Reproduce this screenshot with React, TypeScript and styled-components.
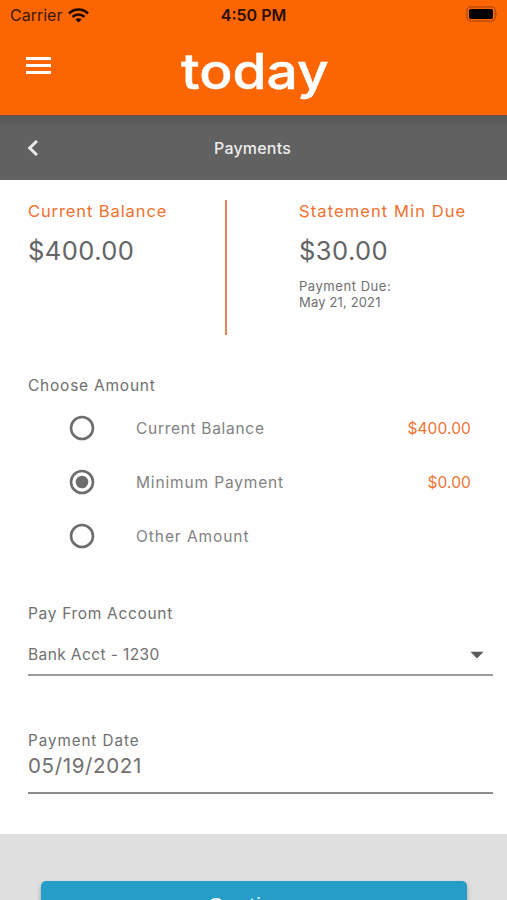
import React, { useState } from "react";
import styled, { createGlobalStyle } from "styled-components";

const GlobalStyle = createGlobalStyle`
  * { box-sizing: border-box; }
  html, body { margin: 0; padding: 0; background: #fefefe; }
  body { overflow: hidden; font-family: Inter, "Liberation Sans", sans-serif; color: #6a6a6a; }
`;

const Screen = styled.div`
  width: 507px;
  height: 900px;
  overflow: hidden;
  display: flex;
  flex-direction: column;
  background: #fefefe;
`;

const Text = styled.span<{ $size: number; $spacing?: number; $line: number; $weight?: number; $color?: string }>`
  display: block;
  width: max-content;
  white-space: nowrap;
  font-size: ${(p) => p.$size}px;
  letter-spacing: ${(p) => p.$spacing ?? 0}px;
  line-height: ${(p) => p.$line}px;
  font-weight: ${(p) => p.$weight ?? 400};
  color: ${(p) => p.$color ?? "#707070"};
`;

const Header = styled.header`
  flex: none;
  height: 115px;
  background: #fb6502;
`;

const StatusBar = styled.div`
  height: 30px;
  padding: 0 9px 0 9px;
  display: grid;
  grid-template-columns: 1fr auto 1fr;
  align-items: center;
`;

const Carrier = styled.div`
  display: flex;
  align-items: center;
  gap: 6px;
  padding-left: 1px;
`;

const BatteryIcon = styled.svg`
  justify-self: end;
  margin-bottom: 2px;
`;

const Brand = styled.div`
  height: 85px;
  display: grid;
  grid-template-columns: 181px 1fr;
  align-items: start;
`;

const MenuButton = styled.button`
  width: 25px;
  height: 18px;
  margin: 27px 0 0 26px;
  padding: 0;
  border: 0;
  background: none;
  display: flex;
  flex-direction: column;
  gap: 4px;
`;

const MenuLine = styled.span`
  height: 3px;
  background: #fff;
`;

const Logo = styled.div`
  width: max-content;
  margin-top: 12px;
  font-size: 49px;
  font-weight: 500;
  line-height: 60px;
  -webkit-text-stroke: 0.5px #fff;
  color: #fff;
  transform: scaleX(1.125);
  transform-origin: left center;
`;

const TitleBar = styled.div`
  flex: none;
  height: 65px;
  display: grid;
  grid-template-columns: 1fr auto 1fr;
  align-items: center;
  padding: 0 29px 0 27px;
  background: linear-gradient(#575757, #616161 12px);
  border-top: 1px solid #70533c;
`;

const Balances = styled.section`
  flex: none;
  height: 155px;
  padding: 20px 0 0 28px;
  display: grid;
  grid-template-columns: 197px 2px auto;
`;

const BalanceColumn = styled.div<{ $inset?: number }>`
  padding-left: ${(p) => p.$inset ?? 0}px;
`;

const DueDate = styled.div`
  margin-top: -2px;
`;

const Divider = styled.div`
  background: #e98058;
`;

const Amounts = styled.section`
  flex: none;
  height: 228px;
  padding: 41px 36px 0 28px;
`;

const OptionList = styled.div`
  padding-top: 5px;
`;

const Option = styled.label`
  height: 54px;
  display: grid;
  grid-template-columns: 108px auto 1fr;
  align-items: center;
`;

const OptionLabel = styled(Text)`
  margin-top: 2px;
`;

const RadioIcon = styled.svg`
  margin-left: 41px;
`;

const Price = styled(OptionLabel)`
  justify-self: end;
`;

const Field = styled.section<{ $height: number; $gap: number; $line: string }>`
  flex: none;
  height: ${(p) => p.$height}px;
  margin: ${(p) => p.$gap}px 14px 0 28px;
  border-bottom: 2px solid ${(p) => p.$line};
`;

const SelectRow = styled.div`
  display: flex;
  justify-content: space-between;
  align-items: center;
  height: 30px;
  margin-top: 15px;
  padding-right: 9px;
`;

const Footer = styled.footer`
  flex: 1;
  margin-top: 40px;
  padding: 47px 40px 0 41px;
  background: #dfdfdf;
`;

const ContinueButton = styled.button`
  width: 100%;
  height: 56px;
  padding: 12px 0 0;
  border: 0;
  border-radius: 5px;
  display: flex;
  justify-content: center;
  align-items: flex-start;
  background: #269dc9;
  box-shadow: 0 3px 5px rgba(0, 0, 0, 0.3);
`;

const options = [
  { label: "Current Balance", amount: "$400.00", spacing: 0.7 },
  { label: "Minimum Payment", amount: "$0.00", spacing: 0.85 },
  { label: "Other Amount", amount: "", spacing: 0.93 },
];

export default function App() {
  const [selected, setSelected] = useState(1);
  return (
    <>
      <GlobalStyle />
      <Screen>
        <Header>
          <StatusBar>
            <Carrier>
              <Text $size={16} $line={20} $color="#3a1803">Carrier</Text>
              <svg width="21" height="15" viewBox="0 0 21 15" fill="none" stroke="#1c0b00" strokeWidth="2.6">
                <path d="M1 5.5C6.2.2 14.8.2 20 5.5" />
                <path d="M4.5 9C7.8 5.7 13.2 5.7 16.5 9" />
                <path d="M7.4 11.5C9.1 9.8 11.9 9.8 13.6 11.5L10.5 14.6Z" fill="#1c0b00" stroke="none" />
              </svg>
            </Carrier>
            <Text $size={16} $line={20} $weight={600} $color="#2a1000">4:50 PM</Text>
            <BatteryIcon width="33" height="16" viewBox="0 0 33 16">
              <rect x="1.9" y="0.9" width="28.4" height="14.2" rx="4" fill="none" stroke="#b04a08" strokeWidth="1.2" />
              <rect x="4" y="3" width="24" height="10" rx="2" fill="#000" />
              <path d="M31.3 5.5Q33 8 31.3 10.5Z" fill="#b04a08" />
            </BatteryIcon>
          </StatusBar>
          <Brand>
            <MenuButton aria-label="Menu"><MenuLine /><MenuLine /><MenuLine /></MenuButton>
            <Logo>today</Logo>
          </Brand>
        </Header>
        <TitleBar>
          <svg width="12" height="16" viewBox="0 0 12 16" fill="none" stroke="#e8e8e8" strokeWidth="3">
            <path d="M10 1L2.7 8L10 15" />
          </svg>
          <Text $size={16} $spacing={0.2} $line={20} $weight={500} $color="#ededed">Payments</Text>
        </TitleBar>
        <Balances>
          <BalanceColumn>
            <Text $size={16.5} $spacing={0.9} $line={22} $color="#f1712f">Current Balance</Text>
            <Text $size={25.5} $spacing={0.45} $line={58} $color="#636466">$400.00</Text>
          </BalanceColumn>
          <Divider />
          <BalanceColumn $inset={72}>
            <Text $size={16.5} $spacing={1.1} $line={22} $color="#f1712f">Statement Min Due</Text>
            <Text $size={25.5} $spacing={0.45} $line={58} $color="#636466">$30.00</Text>
            <DueDate>
              <Text $size={13} $spacing={0.55} $line={16}>Payment Due:</Text>
              <Text $size={13} $spacing={0.15} $line={16}>May 21, 2021</Text>
            </DueDate>
          </BalanceColumn>
        </Balances>
        <Amounts>
          <Text $size={15.5} $spacing={0.77} $line={20}>Choose Amount</Text>
          <OptionList>
            {options.map((o, i) => (
              <Option key={o.label} onClick={() => setSelected(i)}>
                <RadioIcon width="26" height="26" viewBox="0 0 26 26">
                  <circle cx="13" cy="13" r="11" fill="none" stroke="#6d6d6d" strokeWidth="2.6" />
                  {selected === i && <circle cx="13" cy="13" r="6.3" fill="#6d6d6d" />}
                </RadioIcon>
                <OptionLabel $size={15.5} $spacing={o.spacing} $line={20} $color="#828282">{o.label}</OptionLabel>
                <Price $size={15.5} $spacing={0.12} $line={20} $color="#ed7434">{o.amount}</Price>
              </Option>
            ))}
          </OptionList>
        </Amounts>
        <Field $height={73} $gap={40} $line="#9b9b9b">
          <Text $size={15.5} $spacing={0.68} $line={22}>Pay From Account</Text>
          <SelectRow>
            <Text $size={15.5} $spacing={0.4} $line={20}>Bank Acct - 1230</Text>
            <svg width="14" height="8" viewBox="0 0 14 8"><path d="M0.5 0.8H13.5L7 7.5Z" fill="#5a5a5a" /></svg>
          </SelectRow>
        </Field>
        <Field $height={63} $gap={55} $line="#8c8c8c">
          <Text $size={15.2} $spacing={0.95} $line={20}>Payment Date</Text>
          <Text $size={20.5} $spacing={0.65} $line={29}>05/19/2021</Text>
        </Field>
        <Footer>
          <ContinueButton>
            <Text $size={20} $spacing={1.4} $line={24} $weight={500} $color="#fff">Continue</Text>
          </ContinueButton>
        </Footer>
      </Screen>
    </>
  );
}
